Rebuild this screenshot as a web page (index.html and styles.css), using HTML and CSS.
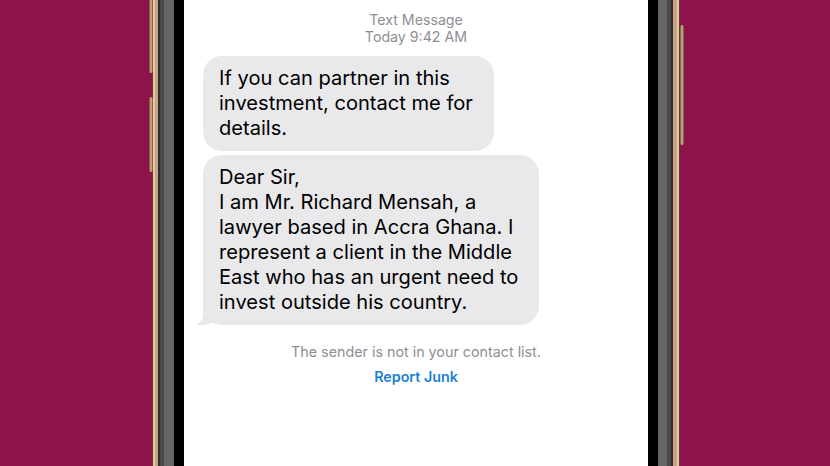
FILE: index.html
```html
<!DOCTYPE html>
<html lang="en">
<head>
  <meta charset="UTF-8" />
  <meta name="viewport" content="width=device-width, initial-scale=1.0"/>
  <title>Text Message</title>
  <link rel="stylesheet" href="styles.css">
</head>
<body>

  <div class="phone">
    <span class="side-btn left-top"></span>
    <span class="side-btn left-mid"></span>
    <span class="side-btn right-top"></span>
    <div class="bezel">
      <div class="glass">
        <div class="screen">
          <div class="thread-head">
            <div>Text Message</div>
            <div>Today 9:42 AM</div>
          </div>
          <div class="thread">
            <div class="bubble">If you can partner in this<br>investment, contact me for<br>details.</div>
            <div class="bubble tail">Dear Sir,<br>I am Mr. Richard Mensah, a<br>lawyer based in Accra Ghana. I<br>represent a client in the Middle<br>East who has an urgent need to<br>invest outside his country.</div>
          </div>
          <div class="junk">
            <p>The sender is not in your contact list.</p>
            <a href="#">Report Junk</a>
          </div>
        </div>
      </div>
    </div>
  </div>

</body>
</html>
```

FILE: styles.css
```css
body {
  margin: 0;
  height: 466px;
  overflow: hidden;
  background: #8e134a;
  font-family: Inter, 'Noto Sans', sans-serif;
  display: flex;
  justify-content: center;
}
.phone {
  position: relative;
  width: 528px;
  height: 620px;
  margin-top: -80px;
  margin-left: 2px;
  box-sizing: border-box;
  padding: 6px 7px 6px 6px;
  border-radius: 70px;
  background: #c9a483;
  box-shadow: inset 0 0 0 1px #5b3b25, inset 0 0 0 3px #e2c6a8;
}
.side-btn {
  position: absolute;
  width: 4px;
  border-radius: 2px;
  background: linear-gradient(90deg, #6b4a30, #d9b996, #6b4a30);
}
.left-top { left: -3px; top: 60px; height: 93px; }
.left-mid { left: -3px; top: 177px; height: 75px; }
.right-top { right: -4px; top: 105px; height: 120px; }
.bezel {
  height: 100%;
  box-sizing: border-box;
  padding: 16px 15px 16px 16px;
  border-radius: 64px;
  background: #666;
  box-shadow: inset 0 0 0 2px #2e2e2e, inset 0 0 0 6px #4a4a4a;
}
.glass {
  height: 100%;
  box-sizing: border-box;
  padding: 10px;
  border-radius: 50px;
  background: #000;
}
.screen {
  height: 100%;
  box-sizing: border-box;
  padding-top: 59px;
  border-radius: 42px;
  background: #fff;
}
.thread-head {
  text-align: center;
  color: #8e8e93;
  font-size: 14.2px;
  line-height: 17px;
}
.thread {
  margin-top: 11px;
  padding-left: 19px;
  display: flex;
  flex-direction: column;
  align-items: flex-start;
  gap: 4px;
}
.bubble {
  position: relative;
  padding: 10px 21px 10px 16px;
  border-radius: 19px;
  background: #e9e9eb;
  color: #000;
  font-size: 20.1px;
  line-height: 25px;
  white-space: nowrap;
}
.tail::before {
  content: "";
  position: absolute;
  left: -6px;
  bottom: 0;
  width: 22px;
  height: 20px;
  background: #e9e9eb;
  border-bottom-right-radius: 16px 14px;
}
.tail::after {
  content: "";
  position: absolute;
  left: -10px;
  bottom: 0;
  width: 10px;
  height: 20px;
  background: #fff;
  border-bottom-right-radius: 10px;
}
.junk {
  margin-top: 18px;
  text-align: center;
  font-size: 14.3px;
  line-height: 17px;
}
.junk p {
  margin: 0;
  color: #8e8e93;
}
.junk a {
  display: inline-block;
  margin-top: 8px;
  color: #1a7fd4;
  font-weight: 600;
  text-decoration: none;
}
```
